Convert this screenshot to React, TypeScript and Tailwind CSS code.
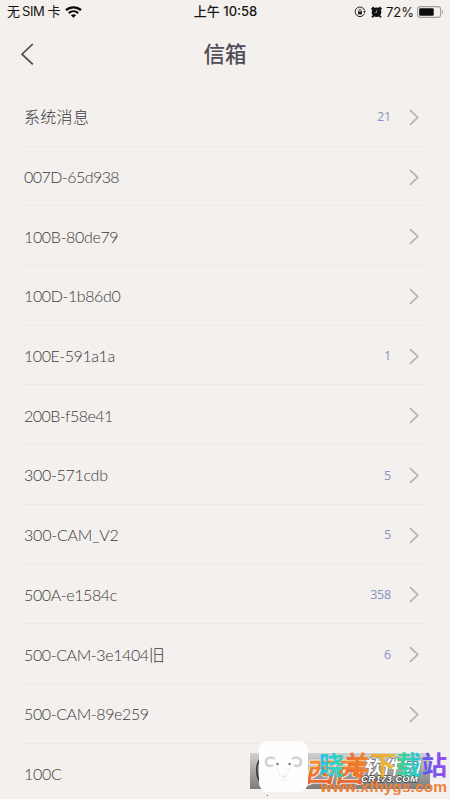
import clsx from "clsx";

interface Mailbox {
  name: string;
  unread?: number;
  tracking: string;
}

const MAILBOXES: Mailbox[] = [
  { name: "系统消息", unread: 21, tracking: "tracking-[0.3px]" },
  { name: "007D-65d938", tracking: "tracking-[-0.55px]" },
  { name: "100B-80de79", tracking: "tracking-[-0.35px]" },
  { name: "100D-1b86d0", tracking: "tracking-[-0.4px]" },
  { name: "100E-591a1a", unread: 1, tracking: "tracking-[-0.45px]" },
  { name: "200B-f58e41", tracking: "tracking-[-0.55px]" },
  { name: "300-571cdb", unread: 5, tracking: "tracking-[-0.3px]" },
  { name: "300-CAM_V2", unread: 5, tracking: "tracking-[-0.2px]" },
  { name: "500A-e1584c", unread: 358, tracking: "tracking-[-0.4px]" },
  { name: "500-CAM-3e1404旧", unread: 6, tracking: "tracking-[-0.4px]" },
  { name: "500-CAM-89e259", tracking: "tracking-[-0.4px]" },
  { name: "100C", tracking: "tracking-[-0.3px]" },
];

function WifiIcon() {
  return (
    <svg className="ml-[5px] h-[12px] w-[17px]" viewBox="0 0 17 12" fill="none" stroke="#0b0b0b">
      <path d="M1 4.2C5.2.3 11.8.3 16 4.2" strokeWidth="2.3" />
      <path d="M3.8 7.1c2.7-2.4 6.7-2.4 9.4 0" strokeWidth="2.1" />
      <path d="M8.5 11.8 5.9 9.2c1.5-1.3 3.7-1.3 5.2 0Z" fill="#0b0b0b" stroke="none" />
    </svg>
  );
}

function StatusBar() {
  return (
    <div className="grid h-6 grid-cols-3 items-center pl-[7px] pr-[6px] text-[#161616]">
      <div className="flex items-center whitespace-nowrap text-[13px]">
        <span>无</span>
        <span className="ml-[2px] tracking-[-0.4px]">SIM</span>
        <span className="ml-[3px]">卡</span>
        <WifiIcon />
      </div>
      <div className="whitespace-nowrap text-center text-[13px] font-medium">上午 10:58</div>
      <div className="flex items-center justify-end">
        {/* Rotation lock */}
        <svg className="h-[12px] w-[12px]" viewBox="0 0 12 12" fill="none" stroke="#222">
          <path d="M10.4 7.6A4.8 4.8 0 1 1 10.6 4.6" strokeWidth="1" />
          <path d="m9 5.2 3 0-1.5 2Z" fill="#222" stroke="none" />
          <rect x="4" y="5.4" width="4" height="3" fill="#222" stroke="none" />
          <path d="M4.9 5.5V4.4a1.1 1.1 0 0 1 2.2 0v1.1" strokeWidth=".8" />
        </svg>
        {/* Alarm */}
        <svg className="ml-[5px] h-[12px] w-[11px]" viewBox="0 0 11 12">
          <circle cx="5.5" cy="6.3" r="4.8" fill="#111" />
          <path d="M.6 3.4 3 1.2M10.4 3.4 8 1.2M2.3 10l-1.2 1.3M8.7 10l1.2 1.3" stroke="#111" strokeWidth="2" />
          <path d="M5.7 3.9v2.6H3.8" fill="none" stroke="#bbb" strokeWidth=".7" />
        </svg>
        <span className="ml-[4px] text-[13px] leading-none">72%</span>
        <svg className="ml-[3px] h-[12px] w-[27px]" viewBox="0 0 27 12">
          <rect x=".6" y=".6" width="23" height="10.8" rx="2.6" fill="none" stroke="#a3a19f" strokeWidth="1.1" />
          <rect x="2.2" y="2.2" width="14.5" height="7.6" rx="1.2" fill="#0b0b0b" />
          <path d="M25 4v4c1.5-.7 1.5-3.3 0-4Z" fill="#a3a19f" />
        </svg>
      </div>
    </div>
  );
}

function MailboxRow({ name, unread, tracking }: Mailbox) {
  return (
    <li className="flex h-[59.7px] items-center border-b border-[#ece9e6] pr-[6px] pt-[2px]">
      <span className={clsx("flex-1 text-[16px] font-light text-[#3c3b41]", tracking)}>{name}</span>
      {unread !== undefined && (
        <span className="pt-px font-['Open_Sans',sans-serif] text-[12.5px] tracking-[-0.2px] text-[#8592c4]">{unread}</span>
      )}
      <svg className="ml-[18px] h-[17px] w-[10px]" viewBox="0 0 10 17" fill="none" stroke="#b5b1ae" strokeWidth="1.7">
        <path d="m1 1.2 7.7 7.3L1 15.8" />
      </svg>
    </li>
  );
}

function Watermark() {
  return (
    <svg className="absolute bottom-0 right-0 h-[64px] w-[205px]" viewBox="245 735 205 64">
      <defs>
        <linearGradient id="plate" x1="0" y1="0" x2="0" y2="1">
          <stop offset="0" stopColor="#d2d0cf" />
          <stop offset="1" stopColor="#7c7c7c" />
        </linearGradient>
        <linearGradient id="orange" x1="0" y1="0" x2="0" y2="1">
          <stop offset="0" stopColor="#f1a63c" />
          <stop offset="1" stopColor="#e8582a" />
        </linearGradient>
        <linearGradient id="site" gradientUnits="userSpaceOnUse" x1="319" y1="0" x2="447" y2="0">
          <stop offset="0" stopColor="#20c4ee" />
          <stop offset=".17" stopColor="#2fd6b8" />
          <stop offset=".21" stopColor="#f0682f" />
          <stop offset=".4" stopColor="#f08a2c" />
          <stop offset=".42" stopColor="#efa62c" />
          <stop offset=".58" stopColor="#e9bc38" />
          <stop offset=".61" stopColor="#3fd488" />
          <stop offset=".79" stopColor="#28c6dc" />
          <stop offset=".81" stopColor="#5a5ce8" />
          <stop offset="1" stopColor="#9a4df0" />
        </linearGradient>
      </defs>
      <rect x="250" y="753" width="180" height="36" fill="url(#plate)" />
      <path d="M262 757c-7 6-7 20 0 27" fill="none" stroke="#333" strokeWidth="1.5" />
      <g className="font-['Noto_Sans_CJK_SC',sans-serif] font-bold" strokeLinejoin="round">
        <text x="0" y="0" fontSize="27" transform="translate(304 782) skewX(-12) scale(1.12 1)" fill="url(#orange)" stroke="#fff" strokeWidth="1.6" style={{ paintOrder: "stroke" }}>西西</text>
        <text x="0" y="0" fontSize="19" transform="translate(363 774) skewX(-10)" fill="#fff" stroke="#777" strokeWidth="1.4" style={{ paintOrder: "stroke" }}>软件园</text>
      </g>
      <text x="361" y="782" fontSize="9.5" textLength="57" fontStyle="italic" className="font-['Liberation_Sans',sans-serif] font-bold" fill="#fff" stroke="#444" strokeWidth="1.4" style={{ paintOrder: "stroke" }}>CR173.COM</text>
      <rect x="259" y="741" width="49" height="51" rx="9" fill="#fefefe" />
      <g fill="none" stroke="#d3d3d3" strokeWidth="2.6">
        <path d="M275 759c-4-3-9-1-9 3s4 5 7 3" />
        <path d="M292 759c4-3 9-1 9 3s-4 5-7 3" />
      </g>
      <path d="M276 767c2 3 4 5 4 10M291 767c-2 3-4 5-4 10M280 779c2 3 6 3 8 0" fill="none" stroke="#efefef" />
      <path d="M281 776c2-1 4-1 6 0l-3 3Z" fill="#e9e9e9" />
      <circle cx="277.5" cy="764" r="1.2" fill="#777" />
      <circle cx="289.5" cy="764" r="1.2" fill="#777" />
      <text x="319" y="775" fontSize="25.6" className="font-['Noto_Sans_CJK_SC',sans-serif] font-bold" fill="url(#site)">晓羊下载站</text>
      <text x="320" y="791.5" fontSize="15.5" textLength="127" className="font-['Liberation_Sans',sans-serif] font-bold" fill="#ed823d">www.xfhygs.com</text>
      <circle cx="267.3" cy="795.5" r=".6" fill="#333" />
    </svg>
  );
}

export default function App() {
  return (
    <div className="relative h-[799px] w-[450px] overflow-hidden bg-[#f3f0ed] font-['Inter','Noto_Sans_CJK_SC',sans-serif]">
      <StatusBar />
      <header className="grid h-[63px] grid-cols-[1fr_auto_1fr] items-center px-[20px] pb-[3px]">
        <svg className="h-[24px] w-[14px]" viewBox="0 0 14 24" fill="none" stroke="#4b4a52" strokeWidth="1.7">
          <path d="M12.8 2 2 12.2l10.8 10.2" />
        </svg>
        <h1 className="text-[21.5px] font-medium text-[#4e4d58]">信箱</h1>
      </header>
      <ul className="pl-6 pr-[25px] font-['Lato','Noto_Sans_CJK_SC',sans-serif]">
        {MAILBOXES.map((box) => (
          <MailboxRow key={box.name} {...box} />
        ))}
      </ul>
      <Watermark />
    </div>
  );
}
